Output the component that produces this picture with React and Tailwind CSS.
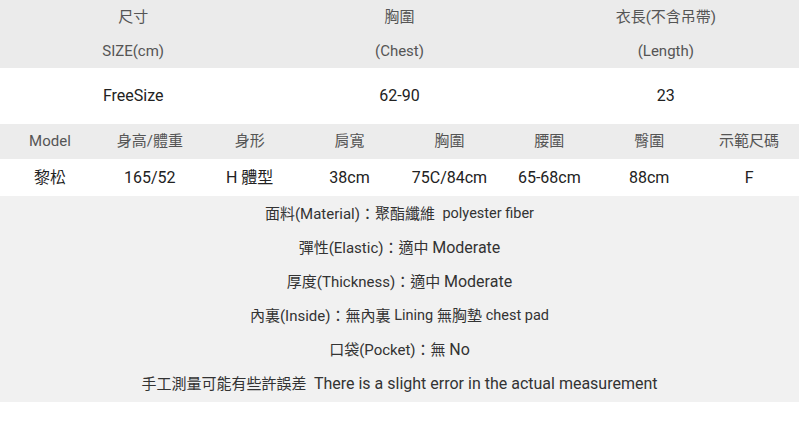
const font = { fontFamily: 'Roboto, "Noto Sans CJK TC", sans-serif' };

const sizeHead = ['尺寸', '胸圍', '衣長(不含吊帶)'];
const sizeSub = ['SIZE(cm)', '(Chest)', '(Length)'];
const sizeVals = ['FreeSize', '62-90', '23'];

const modelHead = ['Model', '身高/體重', '身形', '肩寬', '胸圍', '腰圍', '臀圍', '示範尺碼'];
const modelVals = ['黎松', '165/52', 'H 體型', '38cm', '75C/84cm', '65-68cm', '88cm', 'F'];

export default function App() {
  return (
    <div className="w-[799px] h-[438px] bg-white text-[#333]" style={font}>
      <div className="bg-[#ebebeb] text-[#555] text-[15px]">
        <div className="grid grid-cols-3 h-[34px] items-center text-center">
          {sizeHead.map(t => <div key={t}>{t}</div>)}
        </div>
        <div className="grid grid-cols-3 h-[34px] items-center text-center">
          {sizeSub.map(t => <div key={t}>{t}</div>)}
        </div>
      </div>
      <div className="grid grid-cols-3 h-[56px] items-center text-center text-[16px] text-[#222]">
        {sizeVals.map(t => <div key={t}>{t}</div>)}
      </div>

      <div className="grid grid-cols-8 h-[35px] items-center text-center bg-[#ececec] text-[15px] text-[#555]">
        {modelHead.map(t => <div key={t}>{t}</div>)}
      </div>
      <div className="grid grid-cols-8 h-[37px] items-center text-center text-[16px] text-[#222]">
        {modelVals.map(t => <div key={t}>{t}</div>)}
      </div>

      <div className="bg-[#f1f1f1] pt-px pb-px text-[#333] text-[15px]">
        <div className="h-[34px] flex items-center justify-center">
          面料(Material)：聚酯纖維&nbsp;&nbsp;<span className="text-[14.5px]">polyester fiber</span>
        </div>
        <div className="h-[34px] flex items-center justify-center">
          彈性(Elastic)：適中&nbsp;<span className="text-[16px]">Moderate</span>
        </div>
        <div className="h-[34px] flex items-center justify-center">
          厚度(Thickness)：適中&nbsp;<span className="text-[16px]">Moderate</span>
        </div>
        <div className="h-[34px] flex items-center justify-center">
          內裏(Inside)：無內裏&nbsp;<span className="text-[14.5px]">Lining</span>&nbsp;無胸墊&nbsp;<span className="text-[14.5px]">chest pad</span>
        </div>
        <div className="h-[34px] flex items-center justify-center">
          口袋(Pocket)：無&nbsp;<span className="text-[16px]">No</span>
        </div>
        <div className="h-[34px] flex items-center justify-center">
          手工測量可能有些許誤差&nbsp;&nbsp;<span className="text-[16px]">There is a slight error in the actual measurement</span>
        </div>
      </div>
    </div>
  );
}
